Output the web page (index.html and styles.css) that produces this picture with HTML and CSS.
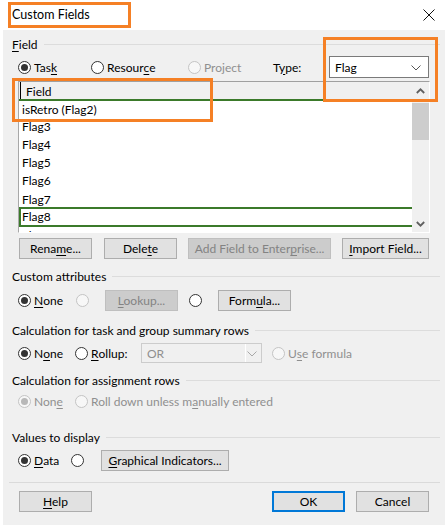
FILE: index.html
```html
<!DOCTYPE html>
<html>
<head>
<meta charset="utf-8">
<link rel="stylesheet" href="styles.css">
</head>
<body>
<div class="dialog">
  <div class="titlebar">
    <span class="title">Custom Fields</span>
    <svg class="close" width="12" height="12" viewBox="0 0 12 12"><path d="M0.5 0.5 L11.5 11.5 M11.5 0.5 L0.5 11.5" stroke="#111" stroke-width="1" fill="none"/></svg>
  </div>
  <div class="body">
    <div class="group g-field"><span><u>F</u>ield</span><i class="rule"></i></div>
    <div class="row r-type">
      <label class="opt w-task"><span class="radio on"></span>Tas<u>k</u></label>
      <label class="opt w-res"><span class="radio"></span>Resour<u>c</u>e</label>
      <label class="opt w-proj dis"><span class="radio"></span>Project</label>
      <span class="typelbl">T<u>y</u>pe:</span>
      <div class="combo c-type"><span>Flag</span>
        <svg class="chev" width="10" height="6" viewBox="0 0 10 6"><path d="M0.5 0.5 L5 5 L9.5 0.5" stroke="#555" fill="none"/></svg>
      </div>
    </div>
    <div class="list">
      <div class="grid">
        <div class="ghead"><span>Field</span></div>
        <div class="grow first">isRetro (Flag2)</div>
        <div class="grow">Flag3</div>
        <div class="grow">Flag4</div>
        <div class="grow">Flag5</div>
        <div class="grow">Flag6</div>
        <div class="grow short">Flag7</div>
        <div class="grow sel">Flag8</div>
        <div class="grow">Flag9</div>
      </div>
      <div class="sbar">
        <div class="sbtn"><svg width="9" height="6" viewBox="0 0 9 6"><path d="M0.8 5 L4.5 1.3 L8.2 5" stroke="#606060" stroke-width="1.8" fill="none"/></svg></div>
        <div class="thumb"></div>
        <div class="strack"></div>
        <div class="sbtn"><svg width="9" height="6" viewBox="0 0 9 6"><path d="M0.8 1 L4.5 4.7 L8.2 1" stroke="#606060" stroke-width="1.8" fill="none"/></svg></div>
      </div>
    </div>
    <div class="row r-btns">
      <button class="btn b-ren">Rena<u>m</u>e...</button>
      <button class="btn b-del">Dele<u>t</u>e</button>
      <button class="btn b-add dis">Add Field to Enter<u>p</u>rise...</button>
      <button class="btn b-imp"><u>I</u>mport Field...</button>
    </div>

    <div class="group g-attr"><span>Custom attributes</span><i class="rule"></i></div>
    <div class="row r-attr">
      <label class="opt w-none1"><span class="radio on"></span><u>N</u>one</label>
      <span class="radio dis r-look"></span>
      <button class="btn b-look dis"><u>L</u>ookup...</button>
      <span class="radio r-form"></span>
      <button class="btn b-form">Form<u>u</u>la...</button>
    </div>

    <div class="group g-calc"><span>Calculation for task and group summary rows</span><i class="rule"></i></div>
    <div class="row r-calc">
      <label class="opt w-none2"><span class="radio on"></span>N<u>o</u>ne</label>
      <label class="opt w-roll"><span class="radio"></span><u>R</u>ollup:</label>
      <div class="combo c-roll dis"><span>OR</span><i class="cdiv"></i>
        <svg class="chev" width="10" height="6" viewBox="0 0 10 6"><path d="M0.5 0.5 L5 5 L9.5 0.5" stroke="#a8a8a8" fill="none"/></svg>
      </div>
      <label class="opt dis w-use"><span class="radio"></span>U<u>s</u>e formula</label>
    </div>

    <div class="group g-assign"><span>Calculation for assignment rows</span><i class="rule"></i></div>
    <div class="row r-assign">
      <label class="opt dis w-none3"><span class="radio on"></span>Non<u>e</u></label>
      <label class="opt dis"><span class="radio"></span>Roll down unless m<u>a</u>nually entered</label>
    </div>

    <div class="group g-values"><span>Values to display</span><i class="rule"></i></div>
    <div class="row r-values">
      <label class="opt w-data"><span class="radio on"></span><u>D</u>ata</label>
      <span class="radio r-gi"></span>
      <button class="btn b-gi"><u>G</u>raphical Indicators...</button>
    </div>

    <div class="sep"></div>
    <div class="row r-foot">
      <button class="btn b-help"><u>H</u>elp</button>
      <span class="spacer"></span>
      <button class="btn b-ok">OK</button>
      <button class="btn b-cancel">Cancel</button>
    </div>
  </div>
</div>
<div class="mark m-title"></div>
<div class="mark m-type"></div>
<div class="mark m-field"></div>
</body>
</html>
```

FILE: styles.css
```css
html, body {
  margin: 0;
  padding: 0;
  background: #ffffff;
}
body {
  width: 447px;
  height: 532px;
  overflow: hidden;
  position: relative;
  font-family: "Lato", "Noto Sans", sans-serif;
  font-size: 12px;
  color: #000;
}
u { text-decoration: underline; text-underline-offset: 2px; }

.dialog {
  margin-left: 3px;
  width: 442px;
  height: 525px;
  background: #f0f0f0;
}
.titlebar {
  height: 30px;
  background: #fff;
  display: flex;
  align-items: center;
  padding-left: 9px;
  padding-right: 9px;
  justify-content: space-between;
  font-size: 12.5px;
}
.title { padding-bottom: 1px; }
.close { margin-right: 1px; }

.body {
  padding: 0 5px 0 9px;
  display: flex;
  flex-direction: column;
}

.group {
  height: 14px;
  display: flex;
  align-items: center;
  white-space: nowrap;
}
.group .rule {
  flex: 1;
  height: 1px;
  background: #dcdcdc;
  margin-left: 6px;
}
.g-field { margin-top: 7px; }
.g-attr { margin-top: 10px; }
.g-calc { margin-top: 12px; }
.g-assign { margin-top: 10px; }
.g-values { margin-top: 20px; }

.row {
  display: flex;
  align-items: center;
  white-space: nowrap;
}
.opt {
  display: flex;
  align-items: center;
}
.radio {
  box-sizing: border-box;
  width: 13px;
  height: 13px;
  border: 1px solid #333;
  border-radius: 50%;
  background: #fff;
  margin-right: 3px;
  display: inline-flex;
  align-items: center;
  justify-content: center;
  flex: none;
}
.radio.on::after {
  content: "";
  width: 7px;
  height: 7px;
  border-radius: 50%;
  background: #333;
}
.dis { color: #8f8f8f; }
.dis .radio, .radio.dis {
  border-color: #c4c4c4;
  background: #f7f7f7;
}
.dis .radio.on::after { background: #b8b8b8; }

/* type row */
.r-type { margin-top: 5px; height: 22px; padding-left: 6px; }
.w-task { width: 73px; }
.w-res { width: 97px; }
.w-proj { width: 85px; }
.typelbl { width: 56px; }
.combo {
  box-sizing: border-box;
  background: #fff;
  border: 1px solid #7a7a7a;
  display: flex;
  align-items: center;
  position: relative;
}
.c-type { width: 100px; height: 22px; padding-left: 5px; }
.c-type .chev { position: absolute; right: 7px; top: 8px; }

/* list */
.list {
  margin-top: 3px;
  margin-left: 6px;
  width: 412px;
  height: 152px;
  box-sizing: border-box;
  border-top: 1px solid #a0a0a0;
  border-left: 1px solid #a8a8a8;
  border-right: 1px solid #fff;
  border-bottom: 1px solid #fff;
  display: flex;
  background: #fff;
  overflow: hidden;
}
.grid {
  flex: 1;
  overflow: hidden;
}
.ghead {
  height: 17px;
  background: #f0f0f0;
  border-bottom: 2px solid #3b7a2a;
  display: flex;
  align-items: center;
}
.ghead span {
  border-left: 1px solid #000;
  padding-left: 5px;
  height: 17px;
  line-height: 19px;
  margin-left: 1px;
}
.grow {
  height: 18px;
  line-height: 18px;
  padding-left: 3px;
}
.grow.first { height: 17px; line-height: 17px; }
.grow.short { height: 17px; line-height: 19px; }
.grow.sel {
  height: 16px;
  line-height: 16px;
  border-top: 2px solid #3b7a2a;
  border-bottom: 2px solid #3b7a2a;
  border-left: 2px solid #3b7a2a;
  padding-left: 1px;
}
.sbar {
  width: 17px;
  background: #f0f0f0;
  display: flex;
  flex-direction: column;
}
.sbtn {
  height: 17px;
  display: flex;
  align-items: center;
  justify-content: center;
}
.thumb {
  height: 37px;
  margin-top: 4px;
  background: #cdcdcd;
}
.strack { flex: 1; }

/* buttons */
.btn {
  box-sizing: border-box;
  font: inherit;
  color: #000;
  background: #e1e1e1;
  border: 1px solid #adadad;
  height: 21px;
  padding: 0;
  margin: 0;
  white-space: nowrap;
}
.btn.dis {
  background: #cccccc;
  border-color: #bfbfbf;
  color: #838383;
}
.r-btns { margin-top: 5px; padding-left: 7px; }
.b-ren { width: 73px; }
.b-del { width: 73px; margin-left: 12px; }
.b-add { width: 143px; margin-left: 11px; }
.b-imp { width: 87px; margin-left: 11px; }

.r-attr { margin-top: 7px; height: 21px; padding-left: 6px; }
.w-none1 { width: 58px; }
.r-look { margin-right: 0; }
.b-look { width: 73px; margin-left: 16px; }
.r-form { margin-left: 11px; margin-right: 0; }
.b-form { width: 73px; margin-left: 16px; }

.r-calc { margin-top: 6px; height: 20px; padding-left: 6px; }
.w-none2 { width: 57px; }
.w-roll { width: 66px; }
.c-roll {
  width: 121px;
  height: 20px;
  padding-left: 5px;
  background: #f0f0f0;
  border-color: #cccccc;
}
.c-roll .cdiv {
  position: absolute;
  left: 103px;
  top: 0;
  bottom: 0;
  width: 1px;
  background: #fff;
}
.c-roll .chev { position: absolute; right: 4px; top: 7px; }
.w-use { margin-left: 10px; }

.r-assign { margin-top: 5px; height: 18px; padding-left: 6px; }
.w-none3 { width: 57px; }

.r-values { margin-top: 6px; height: 21px; padding-left: 6px; }
.w-data { width: 53px; }
.r-gi { margin-right: 0; }
.b-gi { width: 128px; margin-left: 17px; }

.sep {
  margin-top: 11px;
  margin-left: -3px;
  height: 1px;
  background: #dadada;
}
.r-foot { margin-top: 8px; padding-left: 7px; }
.b-help { width: 73px; }
.spacer { flex: 1; }
.b-ok {
  width: 73px;
  border: 2px solid #0078d7;
}
.b-cancel { width: 73px; margin-left: 11px; margin-right: 11px; }

/* annotation overlays */
.mark {
  position: absolute;
  border: 3px solid #f58025;
  box-sizing: border-box;
}
.m-title { left: 8px; top: 2px; width: 123px; height: 26px; }
.m-type { left: 323px; top: 37px; width: 115px; height: 65px; }
.m-field { left: 12px; top: 78px; width: 201px; height: 44px; }
```
